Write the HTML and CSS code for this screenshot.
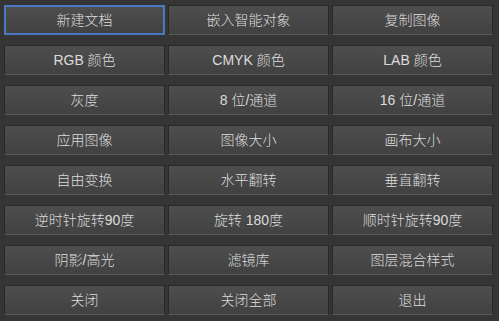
FILE: index.html
```html
<!DOCTYPE html>
<html lang="zh">
<head>
<meta charset="utf-8">
<link rel="stylesheet" href="styles.css">
</head>
<body>
<div class="grid">
  <button class="btn focused">新建文档</button>
  <button class="btn">嵌入智能对象</button>
  <button class="btn">复制图像</button>
  <button class="btn">RGB 颜色</button>
  <button class="btn">CMYK 颜色</button>
  <button class="btn">LAB 颜色</button>
  <button class="btn">灰度</button>
  <button class="btn">8 位/通道</button>
  <button class="btn">16 位/通道</button>
  <button class="btn">应用图像</button>
  <button class="btn">图像大小</button>
  <button class="btn">画布大小</button>
  <button class="btn">自由变换</button>
  <button class="btn">水平翻转</button>
  <button class="btn">垂直翻转</button>
  <button class="btn">逆时针旋转90度</button>
  <button class="btn">旋转 180度</button>
  <button class="btn">顺时针旋转90度</button>
  <button class="btn">阴影/高光</button>
  <button class="btn">滤镜库</button>
  <button class="btn">图层混合样式</button>
  <button class="btn">关闭</button>
  <button class="btn">关闭全部</button>
  <button class="btn">退出</button>
</div>
</body>
</html>
```
FILE: styles.css
```css
html, body {
  margin: 0;
  background: #353535;
}
body {
  padding: 5px 6px 0 4px;
  font-family: "Liberation Sans", "Noto Sans CJK SC", sans-serif;
}
.grid {
  display: grid;
  grid-template-columns: repeat(3, 1fr);
  column-gap: 3px;
  row-gap: 10px;
}
.btn {
  box-sizing: border-box;
  height: 30px;
  margin: 0;
  padding: 0;
  border: 1px solid #282828;
  border-bottom-color: #5a5a5a;
  background: linear-gradient(#4e4e4e, #414141);
  color: #dcdcdc;
  font-family: inherit;
  font-size: 14px;
  font-weight: 300;
  line-height: 28px;
  text-align: center;
  outline: none;
}
.btn.focused {
  border: 2px solid #4a78c4;
  line-height: 26px;
}
```
